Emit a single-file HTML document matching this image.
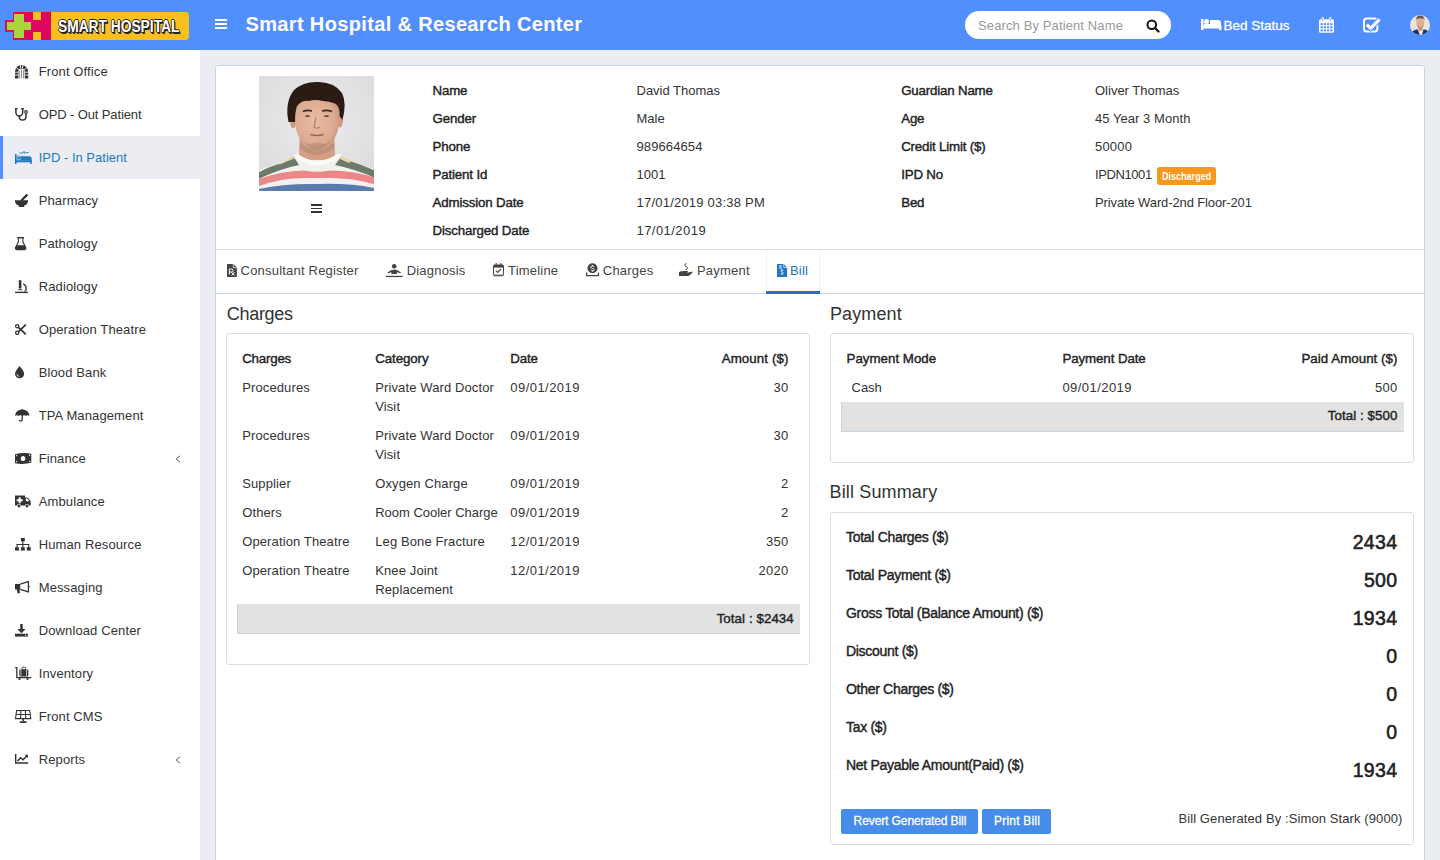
<!DOCTYPE html>
<html><head><meta charset="utf-8"><title>Smart Hospital</title>
<style>
html,body{margin:0;padding:0;width:1440px;height:860px;overflow:hidden;}
body{position:relative;font-family:"Liberation Sans",sans-serif;color:#333;background:#ecedf2}
.t{position:absolute;white-space:nowrap}
.r{position:absolute}
.logo{font-family:"Liberation Sans",sans-serif;font-weight:700;font-size:17px;line-height:17px;color:#fff;transform:scaleX(0.81);transform-origin:0 0;text-shadow:1px 0 0 #222,-1px 0 0 #222,0 1px 0 #222,0 -1px 0 #222,1.5px 1.5px 0 #222,1px 1px 0 #222}
</style></head><body>
<div class="r" style="left:0px;top:0px;width:1440px;height:860px;background:#ecedf2"></div>
<div class="r" style="left:0px;top:0px;width:1440px;height:50px;background:#528ffe"></div>
<div class="r" style="left:0px;top:50px;width:200px;height:810px;background:#fff"></div>
<div class="r" style="left:0px;top:136px;width:200px;height:43px;background:#ecedf2"></div>
<div class="r" style="left:0px;top:136px;width:3px;height:43px;background:#528ffe"></div>
<div class="r" style="left:215px;top:65px;width:1210px;height:820px;background:#fff;border:1px solid #c8d5de;border-radius:3px;box-sizing:border-box"></div>
<div class="r" style="left:216px;top:249px;width:1208px;height:1px;background:#dedede"></div>
<div class="r" style="left:216px;top:293px;width:1208px;height:1px;background:#c8d5de"></div>
<div class="r" style="left:766px;top:250px;width:1px;height:43px;background:#f1f1f1"></div>
<div class="r" style="left:819px;top:250px;width:1px;height:43px;background:#f1f1f1"></div>
<div class="r" style="left:766px;top:291px;width:54px;height:3px;background:#1f74c6"></div>
<svg class="r" style="left:0;top:0" width="200" height="50" viewBox="0 0 200 50">
<rect x="45" y="12" width="144" height="28" rx="4" fill="#f8bf1f"/>
<rect x="5" y="20" width="10" height="12" fill="#e0065f"/>
<rect x="13" y="12" width="38" height="28" fill="#e0065f"/>
<rect x="33" y="12" width="8" height="8" fill="#f8bf1f"/>
<rect x="33" y="32" width="8" height="8" fill="#f8bf1f"/>
<rect x="7" y="22" width="24" height="8" fill="#a9d63c"/>
<rect x="14" y="14" width="10" height="24" fill="#a9d63c"/>
</svg>
<div class="t logo" style="left:58px;top:17.5px;">SMART HOSPITAL</div>
<div class="r" style="left:215px;top:19px;width:12px;height:2px;background:#fff"></div>
<div class="r" style="left:215px;top:23px;width:12px;height:2px;background:#fff"></div>
<div class="r" style="left:215px;top:27px;width:12px;height:2px;background:#fff"></div>
<div class="t" style="top:13.56px;font-size:20px;line-height:20px;font-weight:700;color:#fff;letter-spacing:0.35px;left:245.5px;">Smart Hospital &amp; Research Center</div>
<div class="r" style="left:965px;top:11px;width:206px;height:28px;background:#fff;border-radius:14px"></div>
<div class="t" style="top:18.99px;font-size:13px;line-height:13px;color:#999;letter-spacing:0.12px;left:978px;">Search By Patient Name</div>
<svg class="r" style="left:1146px;top:19px" width="14" height="14" viewBox="0 0 14 14"><circle cx="5.8" cy="5.8" r="4.3" fill="none" stroke="#111" stroke-width="2"/><path d="M9 9 L12.5 12.5" stroke="#111" stroke-width="2.2" stroke-linecap="round"/></svg>
<svg class="r" style="left:1201px;top:18px" width="21" height="13" viewBox="0 0 21 13"><rect x="0" y="1" width="2.5" height="11" fill="#fff"/><circle cx="5.5" cy="3.5" r="2.5" fill="#fff"/><path d="M9 2 H17 A3 3 0 0 1 20 5 V8 H3 V6 H9 Z" fill="#fff"/><rect x="0" y="8" width="20" height="2.5" fill="#fff"/><rect x="18" y="8" width="2.5" height="4" fill="#fff"/></svg>
<div class="t" style="top:18.57px;font-size:13.5px;line-height:13.5px;color:#fff;left:1223.5px;-webkit-text-stroke:0.3px #fff;">Bed Status</div>
<svg class="r" style="left:1319px;top:16.5px" width="15" height="16" viewBox="0 0 15 16"><rect x="0" y="2.2" width="15" height="13.6" rx="1.6" fill="#fff"/><rect x="2.6" y="0" width="2.2" height="4" rx="1" fill="#fff"/><rect x="10.2" y="0" width="2.2" height="4" rx="1" fill="#fff"/><rect x="3.3" y="1.2" width="0.8" height="2.6" fill="#528ffe"/><rect x="10.9" y="1.2" width="0.8" height="2.6" fill="#528ffe"/>
<g fill="#528ffe"><rect x="1.6" y="6.2" width="2.2" height="2"/><rect x="4.8" y="6.2" width="2.2" height="2"/><rect x="8" y="6.2" width="2.2" height="2"/><rect x="11.2" y="6.2" width="2.2" height="2"/><rect x="1.6" y="9.3" width="2.2" height="2"/><rect x="4.8" y="9.3" width="2.2" height="2"/><rect x="8" y="9.3" width="2.2" height="2"/><rect x="11.2" y="9.3" width="2.2" height="2"/><rect x="1.6" y="12.4" width="2.2" height="2"/><rect x="4.8" y="12.4" width="2.2" height="2"/><rect x="8" y="12.4" width="2.2" height="2"/><rect x="11.2" y="12.4" width="2.2" height="2"/></g></svg>
<svg class="r" style="left:1362px;top:16px" width="20" height="17" viewBox="0 0 20 17"><rect x="2" y="2.5" width="13.3" height="13" rx="2.6" fill="none" stroke="#fff" stroke-width="1.9"/><path d="M4.8 8.6 L8.6 12.3 L17.6 3.4" fill="none" stroke="#528ffe" stroke-width="5.2"/><path d="M4.8 8.6 L8.6 12.3 L17.6 3.4" fill="none" stroke="#fff" stroke-width="3.1"/></svg>
<svg class="r" style="left:1410px;top:15px" width="20" height="20" viewBox="0 0 20 20"><defs><clipPath id="av"><circle cx="10" cy="10" r="10"/></clipPath></defs><g clip-path="url(#av)"><rect width="20" height="20" fill="#ebe5dc"/>
<path d="M8.5 12 L8.5 16 H12.5 L12.5 12 Z" fill="#c9967c"/><ellipse cx="10.2" cy="7.6" rx="4" ry="5.4" fill="#dcae94"/><path d="M5.8 6 Q5.8 0.3 10.4 0.5 Q14.8 0.5 14.6 6 L13.8 3.8 Q10.2 2.6 6.6 3.8 Z" fill="#6a5646"/>
<path d="M7 10 Q10 14.5 13.5 10 Q13 13.5 10.2 13.4 Q7.5 13.5 7 10Z" fill="#9a7a66" opacity="0.6"/>
<path d="M0 20 Q1.5 15.5 7.5 14.2 L10.2 18 L13.5 14.2 Q19 15 20.5 20Z" fill="#22356a"/><path d="M7.8 14 L9.8 20 H12 L13.6 14 L10.5 16.8Z" fill="#eef1f6"/></g></svg>
<div class="t" style="top:64.99px;font-size:13px;line-height:13px;letter-spacing:0.12px;left:38.7px;">Front Office</div>
<svg class="r" style="left:14.9px;top:64.5px;color:#333" width="13.2" height="13.4" viewBox="0 0 13.2 13.4" overflow="visible"><path d="M0 13.4 V6.6 A6.6 6.6 0 0 1 13.2 6.6 V13.4 H9.8 V6.6 A3.2 3.2 0 0 0 3.4 6.6 V13.4 Z" fill="currentColor"/>
<g stroke="#fff" stroke-width="0.9"><path d="M0 7.2 H3.4 M9.8 7.2 H13.2 M0 10 H3.4 M9.8 10 H13.2 M1.5 3 L3.9 4.6 M11.7 3 L9.3 4.6 M5.2 0 L5.8 3.4 M8 0 L7.4 3.4"/></g>
<g fill="#888"><rect x="4.3" y="5.5" width="0.9" height="7.9"/><rect x="6.15" y="4.5" width="0.9" height="8.9"/><rect x="8" y="5.5" width="0.9" height="7.9"/></g></svg>
<div class="t" style="top:107.99px;font-size:13px;line-height:13px;letter-spacing:-0.12px;left:38.7px;">OPD - Out Patient</div>
<svg class="r" style="left:14.8px;top:107.7px;color:#333" width="13.4" height="12.9" viewBox="0 0 13.4 12.9" overflow="visible"><g fill="none" stroke="currentColor" stroke-width="1.5"><path d="M0.9 0.3 V4.6 A3.4 3.4 0 0 0 7.7 4.6 V0.3"/><path d="M4.3 8 V8.8 A3.3 3.3 0 0 0 10.9 8.8 V5.3"/></g>
<rect x="0" y="0" width="2.6" height="1.3" fill="currentColor"/><rect x="6.1" y="0" width="2.6" height="1.3" fill="currentColor"/><circle cx="11" cy="4" r="1.9" fill="currentColor"/><circle cx="11" cy="4" r="0.7" fill="#fff"/></svg>
<div class="t" style="top:150.99px;font-size:13px;line-height:13px;color:#1f7bbf;letter-spacing:0.0px;left:38.7px;">IPD - In Patient</div>
<svg class="r" style="left:14.9px;top:150.7px;color:#1f7bbf" width="16.7" height="13" viewBox="0 0 16.7 13" overflow="visible"><rect x="0" y="3" width="1.5" height="10" fill="currentColor"/><rect x="0" y="9.3" width="16.7" height="2" fill="currentColor"/><rect x="15.1" y="9" width="1.6" height="4" fill="currentColor"/>
<path d="M5.5 5.2 H14 Q16.7 5.2 16.7 8 V9.5 H5.5 Z" fill="currentColor"/><rect x="2" y="5" width="3" height="4" fill="none" stroke="currentColor" stroke-width="0.6"/><circle cx="3.5" cy="7" r="1.3" fill="currentColor"/>
<path d="M4.5 2 H8 L9 0.3 L10 2.6 L11 1.5 H13.5" fill="none" stroke="currentColor" stroke-width="0.9"/></svg>
<div class="t" style="top:193.99px;font-size:13px;line-height:13px;letter-spacing:0.12px;left:38.7px;">Pharmacy</div>
<svg class="r" style="left:14.9px;top:193.8px;color:#333" width="13" height="13" viewBox="0 0 13 13" overflow="visible"><path d="M7 5.8 L11.8 1.2" stroke="currentColor" stroke-width="2.3" stroke-linecap="round"/><path d="M0 6.3 H13 V7.4 Q12.3 10.8 9.2 11.5 V13 H3.8 V11.5 Q0.7 10.8 0 7.4 Z" fill="currentColor"/></svg>
<div class="t" style="top:236.99px;font-size:13px;line-height:13px;letter-spacing:0.12px;left:38.7px;">Pathology</div>
<svg class="r" style="left:15px;top:236.9px;color:#333" width="11.3" height="12.6" viewBox="0 0 11.3 12.6" overflow="visible"><rect x="2.2" y="0" width="6.9" height="1.4" fill="currentColor"/><path d="M3.4 1 V4.8 L0.6 10.4 Q-0.2 12.6 2 12.6 H9.3 Q11.5 12.6 10.7 10.4 L7.9 4.8 V1" fill="none" stroke="currentColor" stroke-width="1.1"/><path d="M1.6 8.2 H9.7 L10.8 10.6 Q11.3 12.6 9.3 12.6 H2 Q0 12.6 0.5 10.6 Z" fill="currentColor"/></svg>
<div class="t" style="top:279.99px;font-size:13px;line-height:13px;letter-spacing:0.12px;left:38.7px;">Radiology</div>
<svg class="r" style="left:15px;top:279.6px;color:#333" width="12.9" height="13.1" viewBox="0 0 12.9 13.1" overflow="visible"><rect x="3.8" y="0" width="2.6" height="8.6" rx="1.2" fill="currentColor"/><rect x="3.2" y="9.2" width="4" height="1" fill="currentColor"/><rect x="0" y="11.7" width="12.9" height="1.4" fill="currentColor"/>
<path d="M8.2 3.8 A4.6 4.6 0 0 1 9.6 11.6" fill="none" stroke="currentColor" stroke-width="1.4"/></svg>
<div class="t" style="top:322.99px;font-size:13px;line-height:13px;letter-spacing:0.12px;left:38.7px;">Operation Theatre</div>
<svg class="r" style="left:15px;top:323.5px;color:#333" width="11.3" height="11" viewBox="0 0 11.3 11" overflow="visible"><g fill="none" stroke="currentColor" stroke-width="1.3"><circle cx="2.2" cy="2.2" r="1.6"/><circle cx="2.2" cy="8.8" r="1.6"/></g><path d="M3.5 3.3 L10.8 10.3 M3.5 7.7 L10.8 0.7" stroke="currentColor" stroke-width="1.7"/></svg>
<div class="t" style="top:365.99px;font-size:13px;line-height:13px;letter-spacing:0.12px;left:38.7px;">Blood Bank</div>
<svg class="r" style="left:15px;top:365.9px;color:#333" width="9.2" height="12.2" viewBox="0 0 9.2 12.2" overflow="visible"><path d="M4.6 0 Q9.2 5.5 9.2 7.8 A4.6 4.4 0 0 1 0 7.8 Q0 5.5 4.6 0 Z" fill="currentColor"/><path d="M2 8 Q2 10.2 4.2 10.4" fill="none" stroke="#fff" stroke-width="0.8"/></svg>
<div class="t" style="top:408.99px;font-size:13px;line-height:13px;letter-spacing:0.12px;left:38.7px;">TPA Management</div>
<svg class="r" style="left:15px;top:408.5px;color:#333" width="14.5" height="13.1" viewBox="0 0 14.5 13.1" overflow="visible"><path d="M0 7 Q0.5 0.8 7.25 0.6 Q14 0.8 14.5 7 Q13 5.8 11 6.8 Q9.3 5.8 7.25 6.8 Q5.2 5.8 3.5 6.8 Q1.5 5.8 0 7 Z" fill="currentColor"/><rect x="6.7" y="0" width="1.1" height="1" fill="currentColor"/><path d="M7.25 6 V10.9 A1.5 1.5 0 0 1 4.3 10.9" fill="none" stroke="currentColor" stroke-width="1.3"/></svg>
<div class="t" style="top:451.99px;font-size:13px;line-height:13px;letter-spacing:0.12px;left:38.7px;">Finance</div>
<svg class="r" style="left:15px;top:452.5px;color:#333" width="16.3" height="11" viewBox="0 0 16.3 11" overflow="visible"><path d="M0 1.2 Q8 -0.8 16.3 0.8 V9.8 Q8 11.8 0 10.2 Z" fill="currentColor"/><ellipse cx="8.1" cy="5.5" rx="2.3" ry="2.6" fill="#fff"/><g fill="#fff"><circle cx="1.6" cy="2.6" r="0.7"/><circle cx="14.7" cy="2.3" r="0.7"/><circle cx="1.6" cy="8.6" r="0.7"/><circle cx="14.7" cy="8.4" r="0.7"/></g></svg>
<div class="t" style="top:494.99px;font-size:13px;line-height:13px;letter-spacing:0.12px;left:38.7px;">Ambulance</div>
<svg class="r" style="left:15px;top:494.5px;color:#333" width="15.7" height="13.1" viewBox="0 0 15.7 13.1" overflow="visible"><path d="M0 0.5 H10 V2.5 H12.5 L15.7 6 V10.5 H0 Z" fill="currentColor"/><path d="M10.8 3.4 H12.2 L14.5 6.2 H10.8 Z" fill="#fff"/><path d="M3.7 2.3 H5.7 V4.3 H7.7 V6.3 H5.7 V8.3 H3.7 V6.3 H1.7 V4.3 H3.7 Z" fill="#fff"/>
<circle cx="4" cy="11" r="2.1" fill="#fff"/><circle cx="4" cy="11" r="1.5" fill="currentColor"/><circle cx="12" cy="11" r="2.1" fill="#fff"/><circle cx="12" cy="11" r="1.5" fill="currentColor"/></svg>
<div class="t" style="top:537.99px;font-size:13px;line-height:13px;letter-spacing:0.12px;left:38.7px;">Human Resource</div>
<svg class="r" style="left:15px;top:537.7px;color:#333" width="15.7" height="12.6" viewBox="0 0 15.7 12.6" overflow="visible"><rect x="5.9" y="0" width="3.9" height="3.3" fill="currentColor"/><path d="M7.85 3 V6.5 M2 9.5 V6.5 H13.7 V9.5 M7.85 6.5 V9.5" fill="none" stroke="currentColor" stroke-width="1.1"/><rect x="0" y="9.2" width="3.9" height="3.4" fill="currentColor"/><rect x="5.9" y="9.2" width="3.9" height="3.4" fill="currentColor"/><rect x="11.8" y="9.2" width="3.9" height="3.4" fill="currentColor"/></svg>
<div class="t" style="top:580.99px;font-size:13px;line-height:13px;letter-spacing:0.12px;left:38.7px;">Messaging</div>
<svg class="r" style="left:15px;top:581px;color:#333" width="14.5" height="12.3" viewBox="0 0 14.5 12.3" overflow="visible"><path d="M0 3 H5.2 V8.6 H4.6 L5 12.3 H2.6 L1.8 8.6 H0 Z" fill="currentColor"/><path d="M5.2 3.2 L13.4 0.6 V10.9 L5.2 8.4" fill="none" stroke="currentColor" stroke-width="1.3"/><rect x="13.4" y="4.6" width="1.1" height="2" fill="currentColor"/></svg>
<div class="t" style="top:623.99px;font-size:13px;line-height:13px;letter-spacing:0.12px;left:38.7px;">Download Center</div>
<svg class="r" style="left:15px;top:623.7px;color:#333" width="12.9" height="12.6" viewBox="0 0 12.9 12.6" overflow="visible"><rect x="5.2" y="0" width="2.5" height="5.5" fill="currentColor"/><path d="M2.3 5 H10.6 L6.45 9.2 Z" fill="currentColor"/><rect x="0" y="9.7" width="12.9" height="2.9" fill="currentColor"/><circle cx="10.6" cy="11.15" r="0.6" fill="#fff"/></svg>
<div class="t" style="top:666.99px;font-size:13px;line-height:13px;letter-spacing:0.12px;left:38.7px;">Inventory</div>
<svg class="r" style="left:15px;top:666.5px;color:#333" width="16.3" height="13.1" viewBox="0 0 16.3 13.1" overflow="visible"><path d="M0.2 0.6 H1.8 V10.6 H16.3" fill="none" stroke="currentColor" stroke-width="1.3"/><circle cx="4.5" cy="12" r="1.1" fill="currentColor"/><circle cx="12.5" cy="12" r="1.1" fill="currentColor"/>
<rect x="4.3" y="2.5" width="9" height="7" rx="1" fill="currentColor"/><rect x="7" y="0.3" width="3.6" height="2.4" rx="0.8" fill="none" stroke="currentColor" stroke-width="0.9"/><rect x="5.6" y="3" width="0.7" height="6" fill="#fff"/><rect x="11.3" y="3" width="0.7" height="6" fill="#fff"/></svg>
<div class="t" style="top:709.99px;font-size:13px;line-height:13px;letter-spacing:0.12px;left:38.7px;">Front CMS</div>
<svg class="r" style="left:15px;top:709.7px;color:#333" width="16.3" height="13" viewBox="0 0 16.3 13" overflow="visible"><path d="M1.6 0.5 H14.7 L15.8 8.6 H0.5 Z M1.1 4.5 H15.2 M5.9 0.5 L5.6 8.6 M10.4 0.5 L10.7 8.6" fill="none" stroke="currentColor" stroke-width="1.1"/><rect x="7.4" y="8.6" width="1.5" height="2.6" fill="currentColor"/><rect x="4.6" y="11.3" width="7.1" height="1.7" rx="0.8" fill="currentColor"/></svg>
<div class="t" style="top:752.99px;font-size:13px;line-height:13px;letter-spacing:0.12px;left:38.7px;">Reports</div>
<svg class="r" style="left:15px;top:754.2px;color:#333" width="13.2" height="9.7" viewBox="0 0 13.2 9.7" overflow="visible"><path d="M0.7 0 V9 H13.2" fill="none" stroke="currentColor" stroke-width="1.4"/><path d="M2.6 7 L5.6 3.8 L8 5.8 L11.6 2.2" fill="none" stroke="currentColor" stroke-width="1.5"/><path d="M9.6 0.8 H13 V4.2 Z" fill="currentColor"/></svg>
<svg class="r" style="left:175px;top:455px" width="6" height="8" viewBox="0 0 6 8"><path d="M5 0.8 L1.2 4 L5 7.2" fill="none" stroke="#555" stroke-width="1.0"/></svg>
<svg class="r" style="left:175px;top:756px" width="6" height="8" viewBox="0 0 6 8"><path d="M5 0.8 L1.2 4 L5 7.2" fill="none" stroke="#555" stroke-width="1.0"/></svg>
<svg class="r" style="left:259px;top:76px" width="115" height="115" viewBox="0 0 115 115">
<defs><radialGradient id="bgg" cx="0.5" cy="0.4" r="0.75"><stop offset="0" stop-color="#ebebed"/><stop offset="1" stop-color="#dadadc"/></radialGradient>
<radialGradient id="skin" cx="0.45" cy="0.45" r="0.6"><stop offset="0" stop-color="#e8bca4"/><stop offset="0.75" stop-color="#dcaa90"/><stop offset="1" stop-color="#c8947a"/></radialGradient>
<clipPath id="pc"><rect width="115" height="115"/></clipPath></defs>
<g clip-path="url(#pc)">
<rect width="115" height="115" fill="url(#bgg)"/>
<path d="M40.5 62 L40 84 L76 84 L75.5 62 Z" fill="#d3a086"/>
<path d="M41 66 Q58 82 75 66 L75 72 Q58 86 41 72Z" fill="#b98670" opacity="0.6"/>
<ellipse cx="34.2" cy="46" rx="3" ry="6.5" fill="#cf9a80"/>
<ellipse cx="81" cy="45" rx="3" ry="6.5" fill="#cf9a80"/>
<path d="M36 34 Q35.5 22 58 21 Q80.5 22 80 34 L79.5 50 Q78 68 58 74.5 Q38.5 68 36.5 50 Z" fill="url(#skin)"/>
<path d="M41 57 Q45 71 58 74.5 Q71 71 75 57 Q73 66 66 68 Q58 66 50 68 Q43 66 41 57Z" fill="#a07a68" opacity="0.45"/>
<path d="M29.5 46 Q25.5 26 35 14 Q45 5 60 6 Q76 6.5 83 17 Q88 27 83.5 44 L80.5 40 Q81 30 76 27.5 Q70 25 64 25 Q56 23 50 25 Q43 24 38 30 Q36 36 36 46 Z" fill="#2a1c15"/>
<path d="M44 35.5 Q48 33.5 53 35 M63 35 Q68 33.5 73 35.5" stroke="#3a2a22" stroke-width="1.7" fill="none"/>
<path d="M45.5 40.2 Q48.5 38.5 51.5 40.2 Q48.5 41.6 45.5 40.2Z" fill="#4a3c38"/>
<path d="M64.5 40.2 Q67.5 38.5 70.5 40.2 Q67.5 41.6 64.5 40.2Z" fill="#4a3c38"/>
<path d="M57 41 L55 51 Q58 53.5 61 51" stroke="#b9846c" stroke-width="1.3" fill="none"/>
<path d="M51.5 58.5 Q58 60.5 64.5 58.5" stroke="#9a5f50" stroke-width="1.6" fill="none"/>
<path d="M-5 120 L-5 97 Q8 90 26 85 L34.5 79.5 Q58 97 82.5 79.5 L92 85 Q110 90 120 96 L120 120 Z" fill="#f3f1ed"/>
<path d="M-5 99 Q8 91 26 86 L34.5 80.5 L40 89 Q20 93 -5 105 Z" fill="#6d796a"/>
<path d="M82.5 80.5 L92 85.5 Q108 90 120 97 L120 104 Q100 94 76 89 Z" fill="#6d796a"/>
<path d="M22 87 L34 80 L35.5 82.5 Q27 85.5 19 89.5Z" fill="#e4d69c"/>
<path d="M82 80 L92 85 L90 87 L81 83Z" fill="#e4d69c"/>
<path d="M-5 105 Q20 95 45 94.5 Q58 97 71 94.5 Q97 94.5 120 103 L120 110 Q97 102 71 102 L45 102 Q20 102 -5 112 Z" fill="#ea8788"/>
<path d="M-5 114 Q25 107 58 108 Q95 107 120 113 L120 120 L-5 120 Z" fill="#5a7bae"/>
<path d="M34.5 79.5 Q58 99 82.5 79.5 L79 77.5 Q58 92 38 77.5 Z" fill="#fbfaf7"/>
</g></svg>
<div class="r" style="left:311px;top:204px;width:11px;height:1.6px;background:#333"></div>
<div class="r" style="left:311px;top:207.7px;width:11px;height:1.6px;background:#333"></div>
<div class="r" style="left:311px;top:211.4px;width:11px;height:1.6px;background:#333"></div>
<div class="t" style="top:84.13px;font-size:13.3px;line-height:13.3px;-webkit-text-stroke:0.4px #222;color:#222;letter-spacing:-0.15px;left:432.5px;">Name</div>
<div class="t" style="top:84.39px;font-size:13px;line-height:13px;letter-spacing:0px;left:636.5px;">David Thomas</div>
<div class="t" style="top:112.13px;font-size:13.3px;line-height:13.3px;-webkit-text-stroke:0.4px #222;color:#222;letter-spacing:-0.15px;left:432.5px;">Gender</div>
<div class="t" style="top:112.39px;font-size:13px;line-height:13px;letter-spacing:0px;left:636.5px;">Male</div>
<div class="t" style="top:140.13px;font-size:13.3px;line-height:13.3px;-webkit-text-stroke:0.4px #222;color:#222;letter-spacing:-0.15px;left:432.5px;">Phone</div>
<div class="t" style="top:140.39px;font-size:13px;line-height:13px;letter-spacing:0.1px;left:636.5px;">989664654</div>
<div class="t" style="top:168.13px;font-size:13.3px;line-height:13.3px;-webkit-text-stroke:0.4px #222;color:#222;letter-spacing:-0.15px;left:432.5px;">Patient Id</div>
<div class="t" style="top:168.39px;font-size:13px;line-height:13px;letter-spacing:0px;left:636.5px;">1001</div>
<div class="t" style="top:196.13px;font-size:13.3px;line-height:13.3px;-webkit-text-stroke:0.4px #222;color:#222;letter-spacing:-0.15px;left:432.5px;">Admission Date</div>
<div class="t" style="top:196.39px;font-size:13px;line-height:13px;letter-spacing:0.22px;left:636.5px;">17/01/2019 03:38 PM</div>
<div class="t" style="top:224.13px;font-size:13.3px;line-height:13.3px;-webkit-text-stroke:0.4px #222;color:#222;letter-spacing:-0.15px;left:432.5px;">Discharged Date</div>
<div class="t" style="top:224.39px;font-size:13px;line-height:13px;letter-spacing:0.45px;left:636.5px;">17/01/2019</div>
<div class="t" style="top:84.13px;font-size:13.3px;line-height:13.3px;-webkit-text-stroke:0.4px #222;color:#222;letter-spacing:-0.18px;left:901.2px;">Guardian Name</div>
<div class="t" style="top:84.39px;font-size:13px;line-height:13px;letter-spacing:0px;left:1095px;">Oliver Thomas</div>
<div class="t" style="top:112.13px;font-size:13.3px;line-height:13.3px;-webkit-text-stroke:0.4px #222;color:#222;letter-spacing:-0.18px;left:901.2px;">Age</div>
<div class="t" style="top:112.39px;font-size:13px;line-height:13px;letter-spacing:0.05px;left:1095px;">45 Year 3 Month</div>
<div class="t" style="top:140.13px;font-size:13.3px;line-height:13.3px;-webkit-text-stroke:0.4px #222;color:#222;letter-spacing:-0.18px;left:901.2px;">Credit Limit ($)</div>
<div class="t" style="top:140.39px;font-size:13px;line-height:13px;letter-spacing:0.2px;left:1095px;">50000</div>
<div class="t" style="top:168.13px;font-size:13.3px;line-height:13.3px;-webkit-text-stroke:0.4px #222;color:#222;letter-spacing:-0.18px;left:901.2px;">IPD No</div>
<div class="t" style="top:168.39px;font-size:13px;line-height:13px;letter-spacing:-0.4px;left:1095px;">IPDN1001</div>
<div class="t" style="top:196.13px;font-size:13.3px;line-height:13.3px;-webkit-text-stroke:0.4px #222;color:#222;letter-spacing:-0.18px;left:901.2px;">Bed</div>
<div class="t" style="top:196.39px;font-size:13px;line-height:13px;letter-spacing:-0.12px;left:1095px;">Private Ward-2nd Floor-201</div>
<div class="r" style="left:1157px;top:167px;width:59px;height:18px;background:#f7981c;border-radius:3px"></div>
<div class="t" style="top:170.61px;font-size:10.5px;line-height:10.5px;font-weight:700;color:#fff;left:1161.5px;transform:scaleX(0.86);transform-origin:0 0;">Discharged</div>
<div class="t" style="top:263.79px;font-size:13px;line-height:13px;color:#444;letter-spacing:0.2px;left:240.6px;">Consultant Register</div>
<svg class="r" style="left:227px;top:263.6px;color:#444" width="9.9" height="13" viewBox="0 0 9.9 13" overflow="visible"><path d="M0 0 H6.3 L9.9 3.6 V13 H0 Z" fill="currentColor"/><path d="M6.3 0 V3.6 H9.9" fill="none" stroke="#fff" stroke-width="0.7"/><path d="M2.4 10.5 V5 H4.5 Q6 5 6 6.5 Q6 8 4.5 8 H2.4 M4.4 8 L7.6 11.4 M7.6 8.2 L4.8 11.4" fill="none" stroke="#fff" stroke-width="1"/></svg>
<div class="t" style="top:263.79px;font-size:13px;line-height:13px;color:#444;letter-spacing:0.2px;left:406.7px;">Diagnosis</div>
<svg class="r" style="left:386.2px;top:263.6px;color:#444" width="16.6" height="13.1" viewBox="0 0 16.6 13.1" overflow="visible"><circle cx="8.2" cy="2.3" r="2.3" fill="currentColor"/><path d="M1.5 8.6 Q5 5.6 8.2 5.6 Q11.6 5.6 15 8.6 L14 9.5 Q12 8.3 11 8.3 V10 H5.4 V8.3 Q4.4 8.3 2.5 9.5 Z" fill="currentColor"/><rect x="0" y="11.8" width="16.6" height="1.3" fill="currentColor"/></svg>
<div class="t" style="top:263.79px;font-size:13px;line-height:13px;color:#444;letter-spacing:0.2px;left:508px;">Timeline</div>
<svg class="r" style="left:492.9px;top:263.4px;color:#444" width="11" height="13.3" viewBox="0 0 11 13.3" overflow="visible"><rect x="0.5" y="2" width="10" height="10.8" rx="1.3" fill="none" stroke="currentColor" stroke-width="1"/><rect x="0.5" y="2" width="10" height="2.6" fill="currentColor"/><rect x="2.6" y="0" width="1.1" height="2.4" fill="currentColor"/><rect x="7.3" y="0" width="1.1" height="2.4" fill="currentColor"/><rect x="0.5" y="11.4" width="10" height="1.4" fill="currentColor" opacity="0.6"/><path d="M2.8 7.6 L4.6 9.4 L8 6" fill="none" stroke="currentColor" stroke-width="1.1"/></svg>
<div class="t" style="top:263.79px;font-size:13px;line-height:13px;color:#444;letter-spacing:0.2px;left:602.8px;">Charges</div>
<svg class="r" style="left:586px;top:263.4px;color:#444" width="13" height="13.3" viewBox="0 0 13 13.3" overflow="visible"><circle cx="6.5" cy="5.3" r="5" fill="currentColor"/><path d="M8.2 4 Q8 3 6.5 3 Q4.8 3 4.8 4.2 Q4.8 5.3 6.5 5.4 Q8.2 5.5 8.2 6.6 Q8.2 7.8 6.5 7.8 Q5 7.8 4.8 6.8 M6.5 2 V3 M6.5 7.8 V8.8" fill="none" stroke="#fff" stroke-width="0.9"/><path d="M0.6 9.5 V12.6 H12.4 V9.5" fill="none" stroke="currentColor" stroke-width="1.3"/></svg>
<div class="t" style="top:263.79px;font-size:13px;line-height:13px;color:#444;letter-spacing:0.2px;left:697px;">Payment</div>
<svg class="r" style="left:678.9px;top:263.4px;color:#444" width="14.1" height="13.3" viewBox="0 0 14.1 13.3" overflow="visible"><path d="M7.4 0.5 Q5.6 0.8 5.8 2.4 Q6 3.6 7.4 3.8 Q8.8 4.2 8.6 5.4 Q8.4 6.6 6.6 6.6" fill="none" stroke="currentColor" stroke-width="1"/><path d="M0 9 Q2.5 8.1 4.5 8.1 H9 Q9.3 9.1 8 9.5 H6 Q8 9.6 9.5 9.4 L14.1 8.4 Q12 12 9.5 13 H0 Z" fill="currentColor"/></svg>
<div class="t" style="top:263.79px;font-size:13px;line-height:13px;color:#2273c3;letter-spacing:0.2px;left:790px;">Bill</div>
<svg class="r" style="left:776.8px;top:263.6px;color:#2273c3" width="10.1" height="13" viewBox="0 0 10.1 13" overflow="visible"><path d="M0 0 H6.8 L10.1 3.5 V13 H0 Z" fill="currentColor"/><path d="M6.8 0 V3.5 H10.1" fill="none" stroke="#fff" stroke-width="0.7"/><rect x="1.8" y="1.6" width="3.2" height="0.9" rx="0.4" fill="#fff"/><rect x="1.8" y="3.6" width="3.2" height="0.9" rx="0.4" fill="#fff"/><path d="M6.4 6.6 Q6 6 5.1 6 Q4 6 4 7 Q4 7.9 5.1 8 Q6.2 8.2 6.2 9.1 Q6.2 10 5.1 10 Q4.2 10 3.9 9.4 M5.1 5.2 V6 M5.1 10 V10.9" fill="none" stroke="#fff" stroke-width="0.9"/></svg>
<div class="t" style="top:304.75px;font-size:18px;line-height:18px;letter-spacing:-0.3px;left:226.8px;">Charges</div>
<div class="r" style="left:226px;top:333px;width:584px;height:332px;border:1px solid #ddd;box-sizing:border-box;border-radius:3px"></div>
<div class="t" style="top:351.63px;font-size:13.3px;line-height:13.3px;-webkit-text-stroke:0.4px #222;color:#222;letter-spacing:-0.2px;left:242.2px;">Charges</div>
<div class="t" style="top:351.63px;font-size:13.3px;line-height:13.3px;-webkit-text-stroke:0.4px #222;color:#222;letter-spacing:-0.08px;left:375.2px;">Category</div>
<div class="t" style="top:351.63px;font-size:13.3px;line-height:13.3px;-webkit-text-stroke:0.4px #222;color:#222;letter-spacing:-0.2px;left:510.3px;">Date</div>
<div class="t" style="top:351.63px;font-size:13.3px;line-height:13.3px;-webkit-text-stroke:0.4px #222;color:#222;letter-spacing:0.1px;right:651.5px;">Amount ($)</div>
<div class="t" style="top:380.99px;font-size:13px;line-height:13px;letter-spacing:0.12px;left:242.2px;">Procedures</div>
<div class="t" style="top:380.99px;font-size:13px;line-height:13px;letter-spacing:0.12px;left:375.2px;">Private Ward Doctor</div>
<div class="t" style="top:399.99px;font-size:13px;line-height:13px;letter-spacing:0.12px;left:375.2px;">Visit</div>
<div class="t" style="top:380.99px;font-size:13px;line-height:13px;letter-spacing:0.45px;left:510.3px;">09/01/2019</div>
<div class="t" style="top:380.99px;font-size:13px;line-height:13px;letter-spacing:0.3px;right:651.5px;">30</div>
<div class="t" style="top:429.39px;font-size:13px;line-height:13px;letter-spacing:0.12px;left:242.2px;">Procedures</div>
<div class="t" style="top:429.39px;font-size:13px;line-height:13px;letter-spacing:0.12px;left:375.2px;">Private Ward Doctor</div>
<div class="t" style="top:448.39px;font-size:13px;line-height:13px;letter-spacing:0.12px;left:375.2px;">Visit</div>
<div class="t" style="top:429.39px;font-size:13px;line-height:13px;letter-spacing:0.45px;left:510.3px;">09/01/2019</div>
<div class="t" style="top:429.39px;font-size:13px;line-height:13px;letter-spacing:0.3px;right:651.5px;">30</div>
<div class="t" style="top:476.99px;font-size:13px;line-height:13px;letter-spacing:0.12px;left:242.2px;">Supplier</div>
<div class="t" style="top:476.99px;font-size:13px;line-height:13px;letter-spacing:0.12px;left:375.2px;">Oxygen Charge</div>
<div class="t" style="top:476.99px;font-size:13px;line-height:13px;letter-spacing:0.45px;left:510.3px;">09/01/2019</div>
<div class="t" style="top:476.99px;font-size:13px;line-height:13px;letter-spacing:0.3px;right:651.5px;">2</div>
<div class="t" style="top:505.99px;font-size:13px;line-height:13px;letter-spacing:0.12px;left:242.2px;">Others</div>
<div class="t" style="top:505.99px;font-size:13px;line-height:13px;letter-spacing:-0.02px;left:375.2px;">Room Cooler Charge</div>
<div class="t" style="top:505.99px;font-size:13px;line-height:13px;letter-spacing:0.45px;left:510.3px;">09/01/2019</div>
<div class="t" style="top:505.99px;font-size:13px;line-height:13px;letter-spacing:0.3px;right:651.5px;">2</div>
<div class="t" style="top:535.19px;font-size:13px;line-height:13px;letter-spacing:0.12px;left:242.2px;">Operation Theatre</div>
<div class="t" style="top:535.19px;font-size:13px;line-height:13px;letter-spacing:0.12px;left:375.2px;">Leg Bone Fracture</div>
<div class="t" style="top:535.19px;font-size:13px;line-height:13px;letter-spacing:0.45px;left:510.3px;">12/01/2019</div>
<div class="t" style="top:535.19px;font-size:13px;line-height:13px;letter-spacing:0.3px;right:651.5px;">350</div>
<div class="t" style="top:564.19px;font-size:13px;line-height:13px;letter-spacing:0.12px;left:242.2px;">Operation Theatre</div>
<div class="t" style="top:564.19px;font-size:13px;line-height:13px;letter-spacing:0.12px;left:375.2px;">Knee Joint</div>
<div class="t" style="top:583.19px;font-size:13px;line-height:13px;letter-spacing:0.12px;left:375.2px;">Replacement</div>
<div class="t" style="top:564.19px;font-size:13px;line-height:13px;letter-spacing:0.45px;left:510.3px;">12/01/2019</div>
<div class="t" style="top:564.19px;font-size:13px;line-height:13px;letter-spacing:0.3px;right:651.5px;">2020</div>
<div class="r" style="left:237px;top:604px;width:563px;height:30px;background:#e2e2e2;border-bottom:1px solid #c9d6e0;border-left:1px solid #c9d6e0;box-sizing:border-box"></div>
<div class="t" style="top:611.63px;font-size:13.3px;line-height:13.3px;-webkit-text-stroke:0.4px #222;color:#222;letter-spacing:0.08px;right:646.2px;">Total : $2434</div>
<div class="t" style="top:304.75px;font-size:18px;line-height:18px;letter-spacing:0.1px;left:830px;">Payment</div>
<div class="r" style="left:830px;top:333px;width:584px;height:130px;border:1px solid #ddd;box-sizing:border-box;border-radius:3px"></div>
<div class="t" style="top:352.03px;font-size:13.3px;line-height:13.3px;-webkit-text-stroke:0.4px #222;color:#222;letter-spacing:0.02px;left:846.5px;">Payment Mode</div>
<div class="t" style="top:352.03px;font-size:13.3px;line-height:13.3px;-webkit-text-stroke:0.4px #222;color:#222;letter-spacing:-0.08px;left:1062.4px;">Payment Date</div>
<div class="t" style="top:352.03px;font-size:13.3px;line-height:13.3px;-webkit-text-stroke:0.4px #222;color:#222;letter-spacing:0.05px;right:42.5px;">Paid Amount ($)</div>
<div class="t" style="top:380.69px;font-size:13px;line-height:13px;letter-spacing:-0.05px;left:851.6px;">Cash</div>
<div class="t" style="top:380.69px;font-size:13px;line-height:13px;letter-spacing:0.45px;left:1062.4px;">09/01/2019</div>
<div class="t" style="top:380.69px;font-size:13px;line-height:13px;letter-spacing:0.3px;right:42.5px;">500</div>
<div class="r" style="left:841px;top:402px;width:563px;height:30px;background:#e2e2e2;border-bottom:1px solid #c9d6e0;border-left:1px solid #c9d6e0;box-sizing:border-box"></div>
<div class="t" style="top:409.23px;font-size:13.3px;line-height:13.3px;-webkit-text-stroke:0.4px #222;color:#222;letter-spacing:0.08px;right:42.5px;">Total : $500</div>
<div class="t" style="top:483.35px;font-size:18px;line-height:18px;letter-spacing:0.15px;left:829.5px;">Bill Summary</div>
<div class="r" style="left:830px;top:512px;width:584px;height:333px;border:1px solid #ddd;box-sizing:border-box;border-radius:3px"></div>
<div class="t" style="top:530.14px;font-size:14px;line-height:14px;-webkit-text-stroke:0.4px #222;color:#222;letter-spacing:-0.3px;left:846px;">Total Charges ($)</div>
<div class="t" style="top:533.28px;font-size:19.5px;line-height:19.5px;color:#222;letter-spacing:0.3px;right:42.700000000000045px;-webkit-text-stroke:0.55px #222;">2434</div>
<div class="t" style="top:568.14px;font-size:14px;line-height:14px;-webkit-text-stroke:0.4px #222;color:#222;letter-spacing:-0.3px;left:846px;">Total Payment ($)</div>
<div class="t" style="top:571.28px;font-size:19.5px;line-height:19.5px;color:#222;letter-spacing:0.3px;right:42.700000000000045px;-webkit-text-stroke:0.55px #222;">500</div>
<div class="t" style="top:606.14px;font-size:14px;line-height:14px;-webkit-text-stroke:0.4px #222;color:#222;letter-spacing:-0.3px;left:846px;">Gross Total (Balance Amount) ($)</div>
<div class="t" style="top:609.28px;font-size:19.5px;line-height:19.5px;color:#222;letter-spacing:0.3px;right:42.700000000000045px;-webkit-text-stroke:0.55px #222;">1934</div>
<div class="t" style="top:644.14px;font-size:14px;line-height:14px;-webkit-text-stroke:0.4px #222;color:#222;letter-spacing:-0.3px;left:846px;">Discount ($)</div>
<div class="t" style="top:647.28px;font-size:19.5px;line-height:19.5px;color:#222;letter-spacing:0.3px;right:42.700000000000045px;-webkit-text-stroke:0.55px #222;">0</div>
<div class="t" style="top:682.14px;font-size:14px;line-height:14px;-webkit-text-stroke:0.4px #222;color:#222;letter-spacing:-0.3px;left:846px;">Other Charges ($)</div>
<div class="t" style="top:685.28px;font-size:19.5px;line-height:19.5px;color:#222;letter-spacing:0.3px;right:42.700000000000045px;-webkit-text-stroke:0.55px #222;">0</div>
<div class="t" style="top:720.14px;font-size:14px;line-height:14px;-webkit-text-stroke:0.4px #222;color:#222;letter-spacing:-0.3px;left:846px;">Tax ($)</div>
<div class="t" style="top:723.28px;font-size:19.5px;line-height:19.5px;color:#222;letter-spacing:0.3px;right:42.700000000000045px;-webkit-text-stroke:0.55px #222;">0</div>
<div class="t" style="top:758.14px;font-size:14px;line-height:14px;-webkit-text-stroke:0.4px #222;color:#222;letter-spacing:-0.3px;left:846px;">Net Payable Amount(Paid) ($)</div>
<div class="t" style="top:761.28px;font-size:19.5px;line-height:19.5px;color:#222;letter-spacing:0.3px;right:42.700000000000045px;-webkit-text-stroke:0.55px #222;">1934</div>
<div class="r" style="left:841px;top:809px;width:137px;height:25px;background:#468ce9;border-radius:2px"></div>
<div class="r" style="left:982px;top:809px;width:69px;height:25px;background:#468ce9;border-radius:2px"></div>
<div class="t" style="top:815.44px;font-size:12px;line-height:12px;color:#fff;letter-spacing:-0.1px;left:853.6px;-webkit-text-stroke:0.3px #fff;">Revert Generated Bill</div>
<div class="t" style="top:815.44px;font-size:12px;line-height:12px;color:#fff;letter-spacing:0.2px;left:994px;-webkit-text-stroke:0.3px #fff;">Print Bill</div>
<div class="t" style="top:812.19px;font-size:13px;line-height:13px;letter-spacing:0.1px;right:37.5px;">Bill Generated By :Simon Stark (9000)</div>
</body></html>
